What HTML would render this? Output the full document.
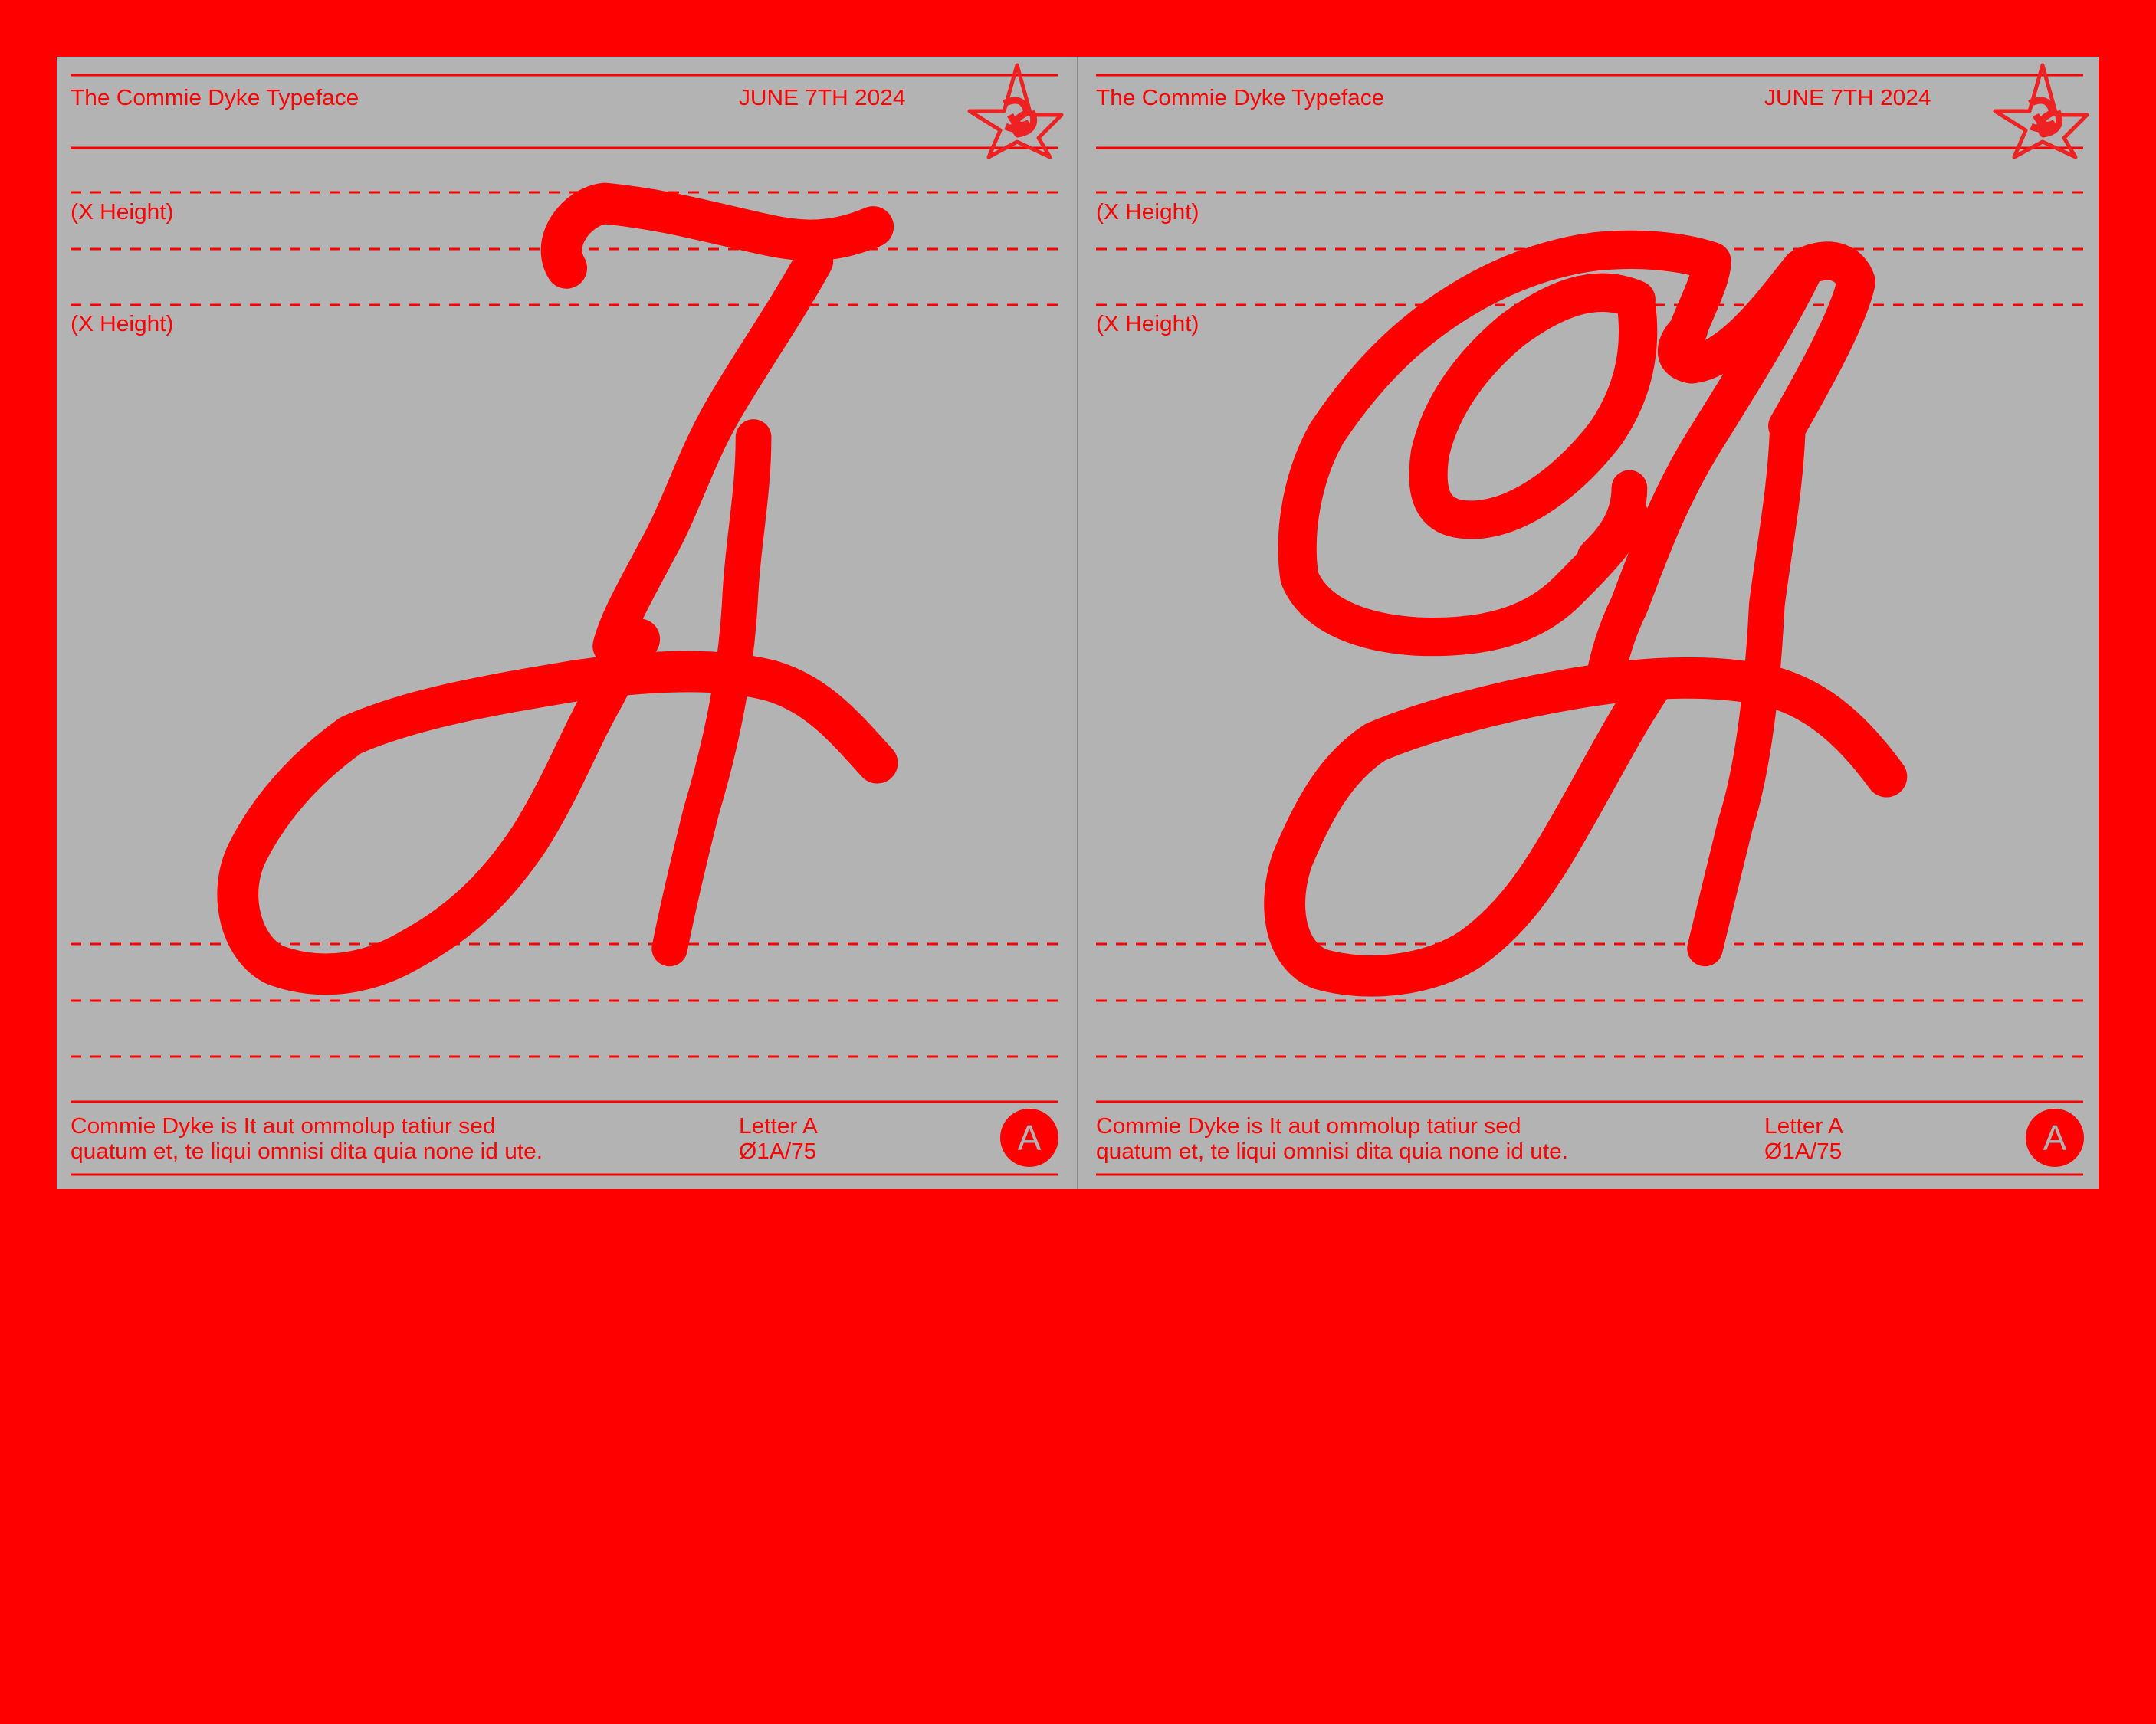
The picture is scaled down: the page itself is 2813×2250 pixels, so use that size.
<!DOCTYPE html>
<html><head><meta charset="utf-8"><style>
html,body{margin:0;padding:0}
body{width:2813px;height:2250px;background:#ff0000;position:relative;overflow:hidden;font-family:"Liberation Sans",sans-serif;color:#ff0000}
.panel{position:absolute;left:74px;top:74px;width:2664px;height:1478px;background:#b3b3b3}
.div{position:absolute;left:1405px;top:74px;width:2px;height:1478px;background:#8a8a8a}
.t{position:absolute;font-size:29px;line-height:34px;white-space:nowrap;transform:scaleX(1.03);transform-origin:left}
.circ{position:absolute;width:76px;height:76px;border-radius:50%;background:#ff0000;color:#b3b3b3;font-size:46px;line-height:76px;text-align:center}
svg{position:absolute;left:0;top:0}
</style></head><body>
<div class="panel"></div>
<div class="div"></div>

<svg width="2813" height="2250" viewBox="0 0 2813 2250">
<g stroke="#ff0000" fill="none">
  <g stroke-width="3">
    <line x1="92" y1="98" x2="1380" y2="98"/><line x1="92" y1="193" x2="1380" y2="193"/>
    <line x1="92" y1="1438" x2="1380" y2="1438"/><line x1="92" y1="1533" x2="1380" y2="1533"/>
    <line x1="1430" y1="98" x2="2718" y2="98"/><line x1="1430" y1="193" x2="2718" y2="193"/>
    <line x1="1430" y1="1438" x2="2718" y2="1438"/><line x1="1430" y1="1533" x2="2718" y2="1533"/>
  </g>
  <g stroke-width="3" stroke-dasharray="14 12">
    <line x1="92" y1="251" x2="1380" y2="251"/><line x1="92" y1="325" x2="1380" y2="325"/><line x1="92" y1="398" x2="1380" y2="398"/>
    <line x1="92" y1="1232" x2="1380" y2="1232"/><line x1="92" y1="1306" x2="1380" y2="1306"/><line x1="92" y1="1379" x2="1380" y2="1379"/>
    <line x1="1430" y1="251" x2="2718" y2="251"/><line x1="1430" y1="325" x2="2718" y2="325"/><line x1="1430" y1="398" x2="2718" y2="398"/>
    <line x1="1430" y1="1232" x2="2718" y2="1232"/><line x1="1430" y1="1306" x2="2718" y2="1306"/><line x1="1430" y1="1379" x2="2718" y2="1379"/>
  </g>
</g>
<g stroke="#ee2222" stroke-width="5" fill="none" stroke-linejoin="round">
  <path d="M1327 85 L1345 150 L1385 150 L1355 180 L1370 205 L1327 185 L1290 205 L1305 170 L1265 145 L1310 145 Z"/>
  <path d="M2665 85 L2683 150 L2723 150 L2693 180 L2708 205 L2665 185 L2628 205 L2643 170 L2603 145 L2648 145 Z"/>
  <path d="M1310 135 q25 -12 30 12 q-25 12 -12 28 q28 -5 18 -30 M1312 165 q18 8 30 -5 M1318 150 q10 20 25 10" stroke-width="9"/>
  <path d="M2648 135 q25 -12 30 12 q-25 12 -12 28 q28 -5 18 -30 M2650 165 q18 8 30 -5 M2656 150 q10 20 25 10" stroke-width="9"/>
</g>
<g transform="scale(1.794)" fill="none" stroke="#ff0000" stroke-linecap="round" stroke-linejoin="round">
  <path stroke-width="30" d="M412 195 C400 175 420 150 440 148 C480 152 510 160 545 168 C575 175 600 180 635 165"/>
  <path stroke-width="28" d="M592 190 C570 230 545 265 525 300 C505 335 495 370 478 400 C465 425 450 450 445 470"/>
  <path stroke-width="26" d="M548 318 C548 360 540 395 538 440 C535 490 525 540 510 590 C500 630 492 665 487 690"/>
  <path stroke-width="30" d="M638 555 C615 530 595 505 560 495 C520 485 470 488 420 495 C360 505 300 515 255 535 C220 560 195 590 180 620 C165 650 175 690 200 702 C235 715 270 708 300 690 C340 668 365 640 385 610 C410 570 420 540 440 505 C450 485 458 475 465 465"/>
  <path stroke-width="28" d="M1222 255 C1230 230 1245 205 1245 190 C1220 182 1190 180 1160 183 C1120 188 1080 205 1045 230 C1010 255 985 285 965 315 C948 345 940 385 945 420 C955 445 985 460 1030 463 C1080 465 1115 455 1140 430 C1160 410 1175 395 1185 375"/>
  <path stroke-width="28" d="M1190 222 C1195 260 1185 290 1168 315 C1145 345 1110 375 1075 378 C1045 380 1035 365 1040 330 C1048 295 1070 265 1100 240 C1130 218 1160 205 1190 218"/>
  <path stroke-width="26" d="M1185 355 C1185 380 1170 395 1160 405"/>
  <path stroke-width="28" d="M1228 240 C1218 250 1215 262 1230 265 C1260 262 1290 220 1310 195 C1330 185 1345 190 1350 205 C1345 230 1320 275 1300 310"/>
  <path stroke-width="28" d="M1310 200 C1290 240 1265 280 1240 320 C1215 360 1200 400 1185 440 C1175 460 1170 480 1168 490"/>
  <path stroke-width="26" d="M1300 315 C1298 360 1290 400 1285 440 C1282 500 1275 560 1262 600 C1252 640 1245 670 1240 690"/>
  <path stroke-width="30" d="M1372 565 C1350 535 1325 510 1290 500 C1250 490 1200 492 1150 500 C1090 510 1035 525 1000 540 C970 560 955 590 940 625 C928 660 935 695 960 705 C995 715 1040 710 1070 690 C1105 665 1125 630 1145 595 C1165 560 1180 530 1200 500"/>
</g>
</svg>

<div class="t" style="left:92px;top:111px">The Commie Dyke Typeface</div>
<div class="t" style="left:964px;top:111px">JUNE 7TH 2024</div>
<div class="t" style="left:92px;top:260px">(X Height)</div>
<div class="t" style="left:92px;top:406px">(X Height)</div>
<div class="t" style="left:92px;top:1453px">Commie Dyke is It aut ommolup tatiur sed</div>
<div class="t" style="left:92px;top:1486px">quatum et, te liqui omnisi dita quia none id ute.</div>
<div class="t" style="left:964px;top:1453px">Letter A</div>
<div class="t" style="left:964px;top:1486px">Ø1A/75</div>
<div class="circ" style="left:1305px;top:1447px">A</div>

<div class="t" style="left:1430px;top:111px">The Commie Dyke Typeface</div>
<div class="t" style="left:2302px;top:111px">JUNE 7TH 2024</div>
<div class="t" style="left:1430px;top:260px">(X Height)</div>
<div class="t" style="left:1430px;top:406px">(X Height)</div>
<div class="t" style="left:1430px;top:1453px">Commie Dyke is It aut ommolup tatiur sed</div>
<div class="t" style="left:1430px;top:1486px">quatum et, te liqui omnisi dita quia none id ute.</div>
<div class="t" style="left:2302px;top:1453px">Letter A</div>
<div class="t" style="left:2302px;top:1486px">Ø1A/75</div>
<div class="circ" style="left:2643px;top:1447px">A</div>
</body></html>
